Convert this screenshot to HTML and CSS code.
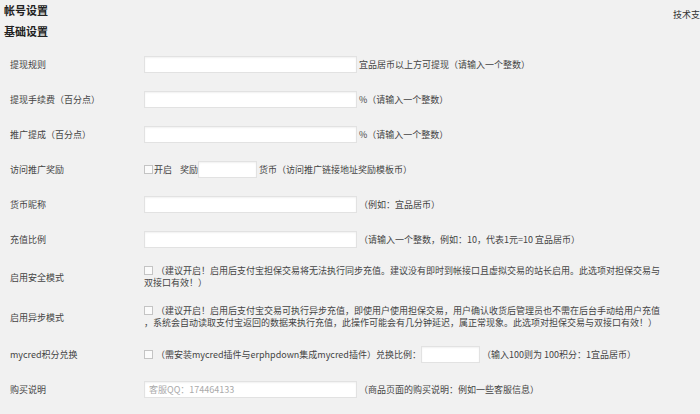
FILE: index.html
```
<!DOCTYPE html>
<html lang="zh-CN">
<head>
    <meta charset="UTF-8">
    <title>帐号设置</title>
    <link rel="stylesheet" href="styles.css">
</head>
<body>
    <div class="wrap">
        <div class="head">
            <h1>帐号设置</h1>
            <span class="support">技术支</span>
        </div>
        <h2>基础设置</h2>

        <div class="form-table">
            <div class="row">
                <div class="label">提现规则</div>
                <div class="field"><input type="text" class="regular"> 宜品居币以上方可提现（请输入一个整数）</div>
            </div>
            <div class="row">
                <div class="label">提现手续费（百分点）</div>
                <div class="field"><input type="text" class="regular"> %（请输入一个整数）</div>
            </div>
            <div class="row">
                <div class="label">推广提成（百分点）</div>
                <div class="field"><input type="text" class="regular"> %（请输入一个整数）</div>
            </div>
            <div class="row">
                <div class="label">访问推广奖励</div>
                <div class="field"><input type="checkbox" class="chk">开启&nbsp;&nbsp;&nbsp; 奖励<input type="text" class="small"> 货币（访问推广链接地址奖励模板币）</div>
            </div>
            <div class="row">
                <div class="label">货币昵称</div>
                <div class="field"><input type="text" class="regular"> （例如：宜品居币）</div>
            </div>
            <div class="row">
                <div class="label">充值比例</div>
                <div class="field"><input type="text" class="regular"> （请输入一个整数，例如：10，代表1元=10 宜品居币）</div>
            </div>
            <div class="row tall">
                <div class="label">启用安全模式</div>
                <div class="field text"><input type="checkbox" class="chk"> （建议开启！启用后支付宝担保交易将无法执行同步充值。建议没有即时到帐接口且虚拟交易的站长启用。此选项对担保交易与双接口有效！）</div>
            </div>
            <div class="row tall">
                <div class="label">启用异步模式</div>
                <div class="field text"><input type="checkbox" class="chk"> （建议开启！启用后支付宝交易可执行异步充值，即使用户使用担保交易，用户确认收货后管理员也不需在后台手动给用户充值<br>，系统会自动读取支付宝返回的数据来执行充值，此操作可能会有几分钟延迟，属正常现象。此选项对担保交易与双接口有效！）</div>
            </div>
            <div class="row">
                <div class="label">mycred积分兑换</div>
                <div class="field"><input type="checkbox" class="chk"> （需安装mycred插件与erphpdown集成mycred插件）兑换比例：<input type="text" class="small"> （输入100则为 100积分：1宜品居币）</div>
            </div>
            <div class="row">
                <div class="label">购买说明</div>
                <div class="field"><input type="text" class="regular" placeholder="客服QQ：174464133"> （商品页面的购买说明：例如一些客服信息）</div>
            </div>
        </div>
    </div>
</body>
</html>
```

FILE: styles.css
```
body {
    margin: 0;
    background-color: #f1f1f1;
    color: #444;
    font-family: "Noto Sans CJK SC", "Liberation Sans", sans-serif;
    font-size: 9px;
    overflow: hidden;
}
.wrap {
    padding: 3px 0 0 4px;
}
.head {
    display: flex;
    align-items: flex-start;
}
h1, h2 {
    margin: 0;
    font-size: 11px;
    line-height: 14px;
    font-weight: bold;
    color: #222;
}
.support {
    margin-left: auto;
    padding-top: 5px;
    white-space: nowrap;
    flex-shrink: 0;
    color: #333;
}
h2 {
    margin-top: 3px;
}
.form-table {
    margin: 9px 0 0 6px;
}
.row {
    display: grid;
    grid-template-columns: 134px 1fr;
    align-items: center;
    padding: 9px 0;
}
.row.tall {
    padding: 8px 0;
}
.label {
    color: #444;
}
.field {
    color: #444;
    line-height: 17px;
    white-space: nowrap;
}
.field.text {
    width: 522px;
    white-space: normal;
    line-height: 12px;
}
input[type="text"] {
    box-sizing: border-box;
    height: 17px;
    margin: 0;
    padding: 0 4px;
    vertical-align: top;
    background: #fff;
    border: 1px solid #e2e2e2;
    box-shadow: inset 0 1px 2px rgba(0, 0, 0, 0.06);
    font-family: inherit;
    font-size: 9px;
    color: #333;
}
input::placeholder {
    color: #aaa;
}
.regular {
    width: 213px;
}
.small {
    width: 59px;
}
.chk {
    appearance: none;
    -webkit-appearance: none;
    box-sizing: border-box;
    width: 9px;
    height: 9px;
    margin: 0 1px 0 0;
    vertical-align: -1px;
    background: #fbfbfb;
    border: 1px solid #c4c4c4;
}
```
